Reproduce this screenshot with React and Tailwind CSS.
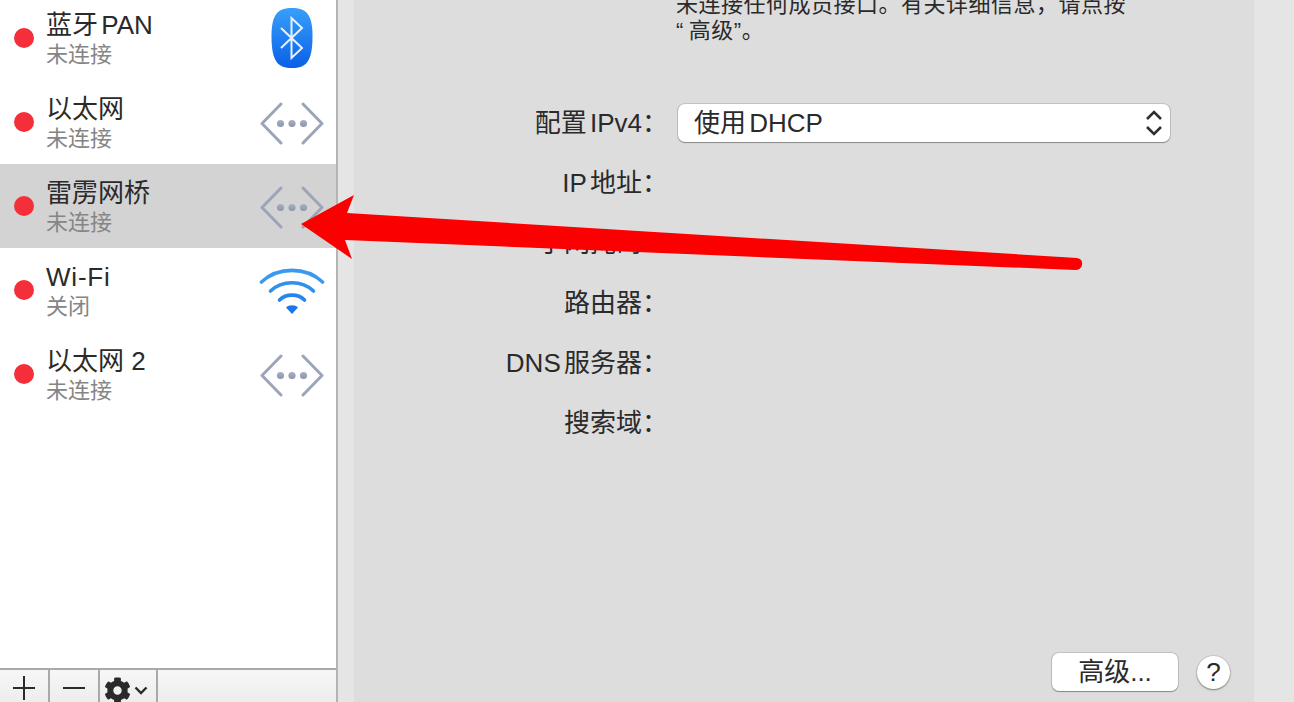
import React from 'react';
import { FaCog } from 'react-icons/fa';

const EthernetIcon = () => (
  <svg className="mt-[3px]" width="64" height="44" viewBox="0 0 64 44" fill="none">
    <defs>
      <linearGradient id="eth" x1="0" y1="0" x2="0" y2="1">
        <stop offset="0" stopColor="#a9b2c3" />
        <stop offset="1" stopColor="#8b95aa" />
      </linearGradient>
    </defs>
    <path d="M21 2 L2 21.5 L21 41" stroke="#9ca5b8" strokeWidth="3" strokeLinecap="round" strokeLinejoin="round" />
    <path d="M43 2 L62 21.5 L43 41" stroke="#9ca5b8" strokeWidth="3" strokeLinecap="round" strokeLinejoin="round" />
    <circle cx="20.5" cy="21.5" r="3.6" fill="url(#eth)" />
    <circle cx="32" cy="21.5" r="3.6" fill="url(#eth)" />
    <circle cx="43.5" cy="21.5" r="3.6" fill="url(#eth)" />
  </svg>
);

const BluetoothIcon = () => (
  <svg className="-mt-[1px]" width="42" height="60" viewBox="0 0 42 60">
    <defs>
      <linearGradient id="bt" x1="0" y1="0" x2="0" y2="1">
        <stop offset="0" stopColor="#38a0fa" />
        <stop offset="1" stopColor="#0a5fe8" />
      </linearGradient>
    </defs>
    <path d="M21 0 C35 0 41.5 6 41.5 28 C41.5 54 35 60 21 60 C7 60 0.5 54 0.5 28 C0.5 6 7 0 21 0 Z" fill="url(#bt)" />
    <path d="M10 20 L31 40 L20.5 50 L20.5 10 L31 20 L10 40" fill="none" stroke="#e8f2fd" strokeWidth="2" strokeLinejoin="miter" />
  </svg>
);

const WifiIcon = () => (
  <svg className="mt-1" width="66" height="48" viewBox="0 0 66 48" fill="none">
    <path d="M2.5 14 C19 -1.5 47 -1.5 63.5 14" stroke="#3b99ee" strokeWidth="3.6" strokeLinecap="round" />
    <path d="M11.5 23 C23 12 43 12 54.5 23" stroke="#3090ee" strokeWidth="3.6" strokeLinecap="round" />
    <path d="M20.5 32 C27 25.5 39 25.5 45.5 32" stroke="#2585ee" strokeWidth="3.6" strokeLinecap="round" />
    <path d="M27 39.5 C30 36.5 36 36.5 39 39.5 L33 46 Z" fill="#1a78ee" />
  </svg>
);

const services = [
  { name: '蓝牙PAN', status: '未连接', icon: <BluetoothIcon /> },
  { name: '以太网', status: '未连接', icon: <EthernetIcon /> },
  { name: '雷雳网桥', status: '未连接', icon: <EthernetIcon />, selected: true },
  { name: 'Wi-Fi', status: '关闭', icon: <WifiIcon />, wide: true },
  { name: '以太网 2', status: '未连接', icon: <EthernetIcon /> },
];

const fields = ['配置IPv4：', 'IP地址：', '子网掩码：', '路由器：', 'DNS服务器：', '搜索域：'];

const ServiceRow = ({ service }) => (
  <div className={`flex h-[84px] items-center pl-[14px] ${service.selected ? 'bg-[#d3d3d3]' : ''}`}>
    <span className="h-5 w-5 shrink-0 rounded-full bg-[#f52f3a]" />
    <div className="ml-3 flex-1 pt-1">
      <div className={`text-[26px] leading-[29px] text-[#2a2a2a] ${service.wide ? 'tracking-[0.8px]' : ''}`}>{service.name}</div>
      <div className="text-[22px] leading-[29px] text-[#858585]">{service.status}</div>
    </div>
    <div className="flex w-[88px] justify-center">{service.icon}</div>
  </div>
);

const App = () => {
  return (
    <div className="relative flex h-[702px] w-[1294px] overflow-hidden bg-[#e5e5e5] font-['Liberation_Sans','Noto_Sans_CJK_SC',sans-serif] [text-autospace:normal]">
      <aside className="flex w-[338px] shrink-0 flex-col border-r-2 border-[#b4b4b4] bg-white">
        <div className="-mt-1 flex-1">
          {services.map(service => (
            <ServiceRow key={service.name} service={service} />
          ))}
        </div>
        <div className="flex h-[34px] shrink-0 overflow-hidden border-t-2 border-[#a9a9a9] bg-gradient-to-b from-[#f7f7f7] to-[#ededed]">
          <div className="flex w-[50px] items-center justify-center border-r-2 border-[#a9a9a9] pt-[3px]">
            <svg width="24" height="24" viewBox="0 0 24 24"><path d="M12 0V24M1 12H23" stroke="#2a2a2a" strokeWidth="2" /></svg>
          </div>
          <div className="flex w-[50px] items-center justify-center border-r-2 border-[#a9a9a9] pt-[3px]">
            <svg width="24" height="24" viewBox="0 0 24 24"><path d="M1 12H23" stroke="#2a2a2a" strokeWidth="2" /></svg>
          </div>
          <div className="flex w-[58px] items-start border-r-2 border-[#a9a9a9] pl-[4px] pt-[7px]">
            <FaCog className="h-[27px] w-[27px] shrink-0 text-[#2a2a2a]" />
            <svg className="ml-[3px] mt-[9px]" width="14" height="9" viewBox="0 0 14 9" fill="none">
              <path d="M1.5 1.5 L7 7 L12.5 1.5" stroke="#2a2a2a" strokeWidth="2.4" />
            </svg>
          </div>
        </div>
      </aside>

      <main className="ml-4 flex h-full w-[900px] flex-col overflow-hidden bg-[#dddddd]">
        <p className="-mt-[8px] ml-[322px] w-[500px] text-[22px] leading-[26px] tracking-[0.5px] text-[#2a2a2a]">
          未连接任何成员接口。有关详细信息，请点按
          <br />
          <span className="mr-[5px]">“</span>高级”。
        </p>
        <div className="mt-[49px] grid grid-cols-[314px_1fr] auto-rows-[60px] items-center gap-x-[10px]">
          {fields.map((label, i) => (
            <React.Fragment key={label}>
              <div className="text-right text-[26px] leading-[30px] text-[#2a2a2a]">{label}</div>
              {i === 0 ? (
                <div className="flex h-[38px] w-[492px] items-center justify-between rounded-[7px] bg-white pl-4 pr-[7px] shadow-[0_0_0_1px_rgba(0,0,0,0.12),0_1px_1px_rgba(0,0,0,0.3)]">
                  <span className="text-[26px] text-[#2a2a2a]">使用DHCP</span>
                  <svg width="18" height="28" viewBox="0 0 18 28" fill="none">
                    <path d="M2 10 L9 3 L16 10M2 18 L9 25 L16 18" stroke="#2f2f2f" strokeWidth="2.6" />
                  </svg>
                </div>
              ) : (
                <div />
              )}
            </React.Fragment>
          ))}
        </div>
        <div className="mt-auto mb-[11px] flex items-center">
          <button className="ml-[698px] flex h-[38px] w-[126px] items-center justify-center rounded-[7px] bg-white text-[26px] text-[#2a2a2a] shadow-[0_0_0_1px_rgba(0,0,0,0.12),0_1px_1px_rgba(0,0,0,0.3)]">
            高级...
          </button>
          <span className="ml-[19px] flex h-[33px] w-[33px] items-center justify-center rounded-full bg-white text-[26px] text-[#2a2a2a] shadow-[0_0_0_1px_rgba(0,0,0,0.08),0_1px_2px_rgba(0,0,0,0.4)]">
            ?
          </span>
        </div>
      </main>

      {/* annotation arrow drawn over the screenshot */}
      <svg className="absolute left-0 top-0" width="1294" height="702" viewBox="0 0 1294 702">
        <path
          d="M301 224 L354 195 L347 213 L1077 258 Q1083 259 1082 265 Q1081 270 1075 270 L345 240 L352 259 Z"
          fill="#fb0000"
        />
      </svg>
    </div>
  );
};

export default App;
